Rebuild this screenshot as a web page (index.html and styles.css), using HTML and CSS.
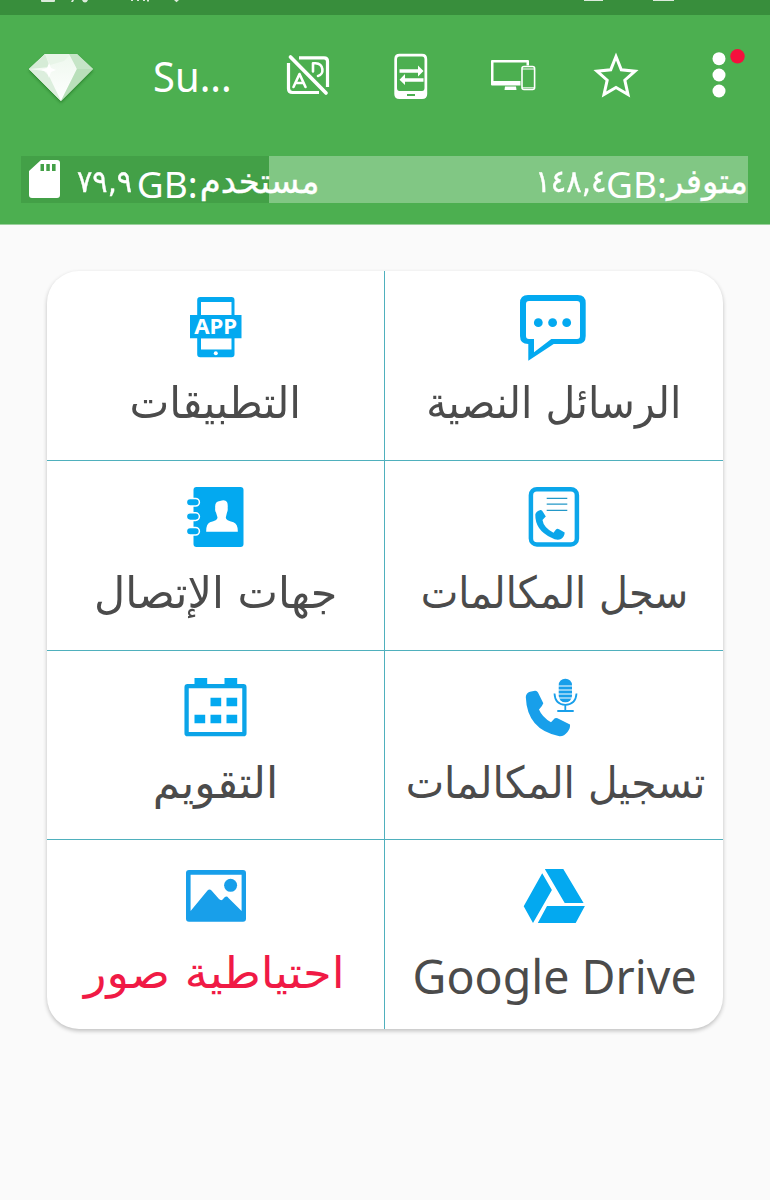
FILE: index.html
```html
<!DOCTYPE html>
<html lang="ar">
<head>
<meta charset="utf-8">
<title>Super Backup</title>
<link rel="stylesheet" href="styles.css">
</head>
<body>
<header class="header">
  <div class="status">
    <svg width="770" height="15" viewBox="0 0 770 15" fill="#dcebdc">
      <path d="M41 0h14v1q0 1-1 1H42q-1 0-1-1zM72 0h2l-1 2h-2zM82 0h6q-1 2.500-3 2.500T82 0zM131 0h2v1h-2zM137 0h2v1h-2zM143 0h2v1h-2zM147 0h2v1.500h-2zM174 0h5l-2.500 2.200zM584 0h19v1h-19zM653 0h21v1h-21z"/>
    </svg>
  </div>
  <div class="toolbar">
    <svg class="tool" viewBox="0 0 70 70">
      <defs>
        <linearGradient id="gem" x1="0" y1="0" x2="0" y2="1"><stop offset="0" stop-color="#eef8ee"/><stop offset="1" stop-color="#fff"/></linearGradient>
      </defs>
      <path class="gem-shadow" d="M19 13H51L67 28 35 60 3 28z" fill="#c3e3c4"/>
      <path d="M19 13H45L51 28 35 60 3 28z" fill="url(#gem)"/>
      <path d="M19 13H45L38 20 24 24z" fill="#e8f5e8"/>
      <path d="M3 28L19 13 24 26z" fill="#d6ecd7"/>
      <path d="M3 28L18 30 23 35 35 60z" fill="#dceedd"/>
      <path d="M51 28L67 28 35 60z" fill="#b9dfba"/>
      <path d="M51 28L43 13H51L67 28z" fill="#c6e5c7"/>
      <path d="M23 22l2 5 5 2-5 2-2 6-2-6-6-2 6-2z" fill="#fff"/>
    </svg>
    <span class="title">Su...</span>
    <svg class="tool" viewBox="0 0 70 70" fill="none" stroke="#fff">
      <path stroke-width="3.200" d="M26 16.800H51Q54.500 16.800 54.500 20.300V46M15.500 22V47.500Q15.500 51.500 19.500 51.500H46"/>
      <path stroke-width="3.700" stroke-linecap="round" d="M17.500 16L53 52"/>
      <path stroke-width="2.600" stroke-linecap="round" stroke-linejoin="round" d="M20.500 46L26.500 33 32.500 46M22.500 42H30.500M40 30.500V22.300H42.500C51 22.800 51.500 33.500 45 35"/>
    </svg>
    <svg class="tool" viewBox="0 0 70 70">
      <path fill="#fff" fill-rule="evenodd" d="M23.500 12.800H46Q51.200 12.800 51.200 18V53Q51.200 58 46 58H23.500Q18.300 58 18.300 53V18Q18.300 12.800 23.500 12.800zM23.500 15.500Q21 15.500 21 18.500V47Q21 50 23.500 50H46Q48.500 50 48.500 47V18.500Q48.500 15.500 46 15.500zM31 53V55H39V53z"/>
      <path fill="#fff" d="M23.500 28.300H42V24.500L47.500 30 42 35.500V31.700H23.500zM47.500 37.200H29V33L23.500 38.800 29 44V40.700H47.500z"/>
    </svg>
    <svg class="tool" viewBox="0 0 70 70">
      <path fill="#fff" fill-rule="evenodd" d="M14 19H50Q51 19 51 20V24.500H48.500V21.500H15.500V40H42.500V44.500H14Q13 44.500 13 43.500V20Q13 19 14 19zM27 45.500H38L38.500 49H26.500z"/>
      <rect x="44" y="25.500" width="12.600" height="23" rx="2" fill="none" stroke="#fff" stroke-width="1.600"/>
      <path stroke="#fff" d="M44 28H56.500M44 46.800H56.500"/>
    </svg>
    <svg class="tool" viewBox="0 0 70 70">
      <path d="M35 15.500L40.300 28.800 54 30.200 43.800 39.200 47 53.500 35 46.500 23 53.500 26.200 39.200 16 30.200 29.700 28.800z" fill="none" stroke="#fff" stroke-width="3"/>
    </svg>
    <svg class="tool" viewBox="0 0 70 70" fill="#fff">
      <circle cx="35" cy="17.700" r="6.500"/><circle cx="35" cy="34" r="6.500"/><circle cx="35" cy="50" r="6.500"/>
      <circle cx="53.500" cy="15.300" r="7.200" fill="#f5103d"/>
    </svg>
  </div>
  <div class="storage">
    <div class="used-fill"></div>
    <div class="used">
      <svg class="sd" viewBox="0 0 31 38"><path fill="#fff" fill-rule="evenodd" d="M12 0H28Q31 0 31 3V35Q31 38 28 38H3Q0 38 0 35V11zM11.500 4V11H15V4zM17.300 4V11H20.800V4zM23 4V11H26.600V4z"/></svg>
      <div class="amount" dir="rtl"><span class="word w-used">مستخدم</span><span class="unit">:</span><span class="unit">GB</span><span class="num n-used">٧٩,٩</span></div>
    </div>
    <div class="amount" dir="rtl"><span class="word w-free">متوفر</span><span class="unit">:</span><span class="unit">GB</span><span class="num n-free">١٤٨,٤</span></div>
  </div>
</header>
<main class="card">
  <div class="tile">
    <svg class="icon" viewBox="0 0 80 70" fill="#03a9f0">
      <path fill-rule="evenodd" d="M24.200 6H55.500Q58.500 6 58.500 9V63.300Q58.500 66.300 55.500 66.300H24.200Q21.200 66.300 21.200 63.300V9Q21.200 6 24.200 6zM25 11V24H55.500V11zM25 47.300V58.500H55.500V47.300z"/>
      <path d="M14 24H65.500V47.300H14z"/><circle cx="39.800" cy="62.300" r="2" fill="#fff"/>
      <text class="app" x="39.700" y="42.800" text-anchor="middle" textLength="43" lengthAdjust="spacingAndGlyphs" fill="#fff">APP</text>
    </svg>
    <span class="label l-apps" dir="rtl">التطبيقات</span>
  </div>
  <div class="tile">
    <svg class="icon" viewBox="0 0 80 70" fill="#03a9f0">
      <path fill-rule="evenodd" d="M14 4H63.700Q71.700 4 71.700 12V45Q71.700 53 63.700 53H39.700L14.300 69.700V53Q6 53 6 45V12Q6 4 14 4zM15 10Q12 10 12 13V45Q12 48 15 48H20V61.300L37.300 48H63Q66 48 66 45V13Q66 10 63 10z"/>
      <circle cx="24.300" cy="31.700" r="4.400"/><circle cx="38.600" cy="31.700" r="4.400"/><circle cx="52.700" cy="31.700" r="4.400"/>
    </svg>
    <span class="label l-sms" dir="rtl">الرسائل النصية</span>
  </div>
  <div class="tile">
    <svg class="icon" viewBox="0 0 80 70" fill="#03a9f0">
      <rect x="17.500" y="6" width="50" height="60" rx="3"/>
      <g stroke="#fff" stroke-width="1.500"><rect x="10.400" y="17.500" width="13" height="7.600" rx="3.800"/><rect x="10.400" y="31.800" width="13" height="7.600" rx="3.800"/><rect x="10.400" y="46.400" width="13" height="7.600" rx="3.800"/></g>
      <path fill="#fff" d="M30.200 50.700Q30 43 34 41.200Q41.500 39.500 41.500 36.500L40 31.500Q38.800 30 39.200 27Q38.500 20.500 44 20Q49 18 51 21Q52 23 51.700 27Q52 30 51 31.500L49.800 36.500Q49.800 39.500 57.500 41.200Q62 43 61.800 50.700z"/>
    </svg>
    <span class="label l-contacts" dir="rtl">جهات الإتصال</span>
  </div>
  <div class="tile">
    <svg class="icon" viewBox="0 0 80 70" fill="#0ba6ea">
      <rect x="16.900" y="8.200" width="46" height="55.300" rx="6" fill="none" stroke="#0ba6ea" stroke-width="4.500"/>
      <path stroke="#2398c8" stroke-width="1.300" d="M32.700 17.300H53.300M32.700 23.100H53.300M32.700 29.300H53.300"/>
      <path d="M21.300 33.500Q22 30 26.500 29Q28 28.800 29 31L31.800 35.500Q30.500 36.500 28.500 39Q29.500 46.500 39.500 51.800L42 48.500Q43.300 47.200 45 48.300L50.700 51.500Q50.500 55.500 47 58Q43 60 37 56.500Q21 49 21.300 33.500z"/>
    </svg>
    <span class="label l-calls" dir="rtl">سجل المكالمات</span>
  </div>
  <div class="tile">
    <svg class="icon" viewBox="0 0 80 70" fill="#03a9f0">
      <rect x="10.600" y="15.200" width="57.800" height="48" rx="1" fill="none" stroke="#0ba4e8" stroke-width="4.300"/>
      <path d="M18.500 7H31.200V14H18.500zM48.500 7H61.200V14H48.500zM34.500 26.700H45.200V35.300H34.500zM50.500 26.700H61.200V35.300H50.500zM18.500 43.700H29.200V52.200H18.500zM34.500 43.700H45.200V52.200H34.500zM50.500 43.700H61.200V52.200H50.500z"/>
    </svg>
    <span class="label l-calendar" dir="rtl">التقويم</span>
  </div>
  <div class="tile">
    <svg class="icon" viewBox="0 0 80 70" fill="#189fea">
      <path d="M11.800 26Q12 22 16 20.700L21 19.700Q23 19.500 24 21.500L29.300 32.300Q28.500 35 25 38.500Q28 46 37 51.300L40.500 47.500Q41.500 46.500 43.500 47.200L56 53.500Q56.500 57 53.500 61Q50 65.500 45.500 65.200Q13 59 11.800 26z"/>
      <rect x="44.700" y="7.700" width="13.300" height="23.600" rx="6.500"/>
      <path stroke="#fff" stroke-width="1" d="M44 15H59M44 19H59M44 23H59M44 27H59"/>
      <path fill="none" stroke="#189fea" stroke-width="1.800" d="M40.500 22.500Q41 33.500 51.300 33.800Q61.800 33.500 62.500 22.500M51.300 33.800V39.500M43.300 40H59.700"/>
    </svg>
    <span class="label l-record" dir="rtl">تسجيل المكالمات</span>
  </div>
  <div class="tile last">
    <svg class="icon" viewBox="0 0 80 70" fill="#189fea">
      <path fill-rule="evenodd" d="M13 9H67Q70 9 70 12V57.800Q70 60.800 67 60.800H13Q10 60.800 10 57.800V12Q10 9 13 9zM14.600 13.700V50L31.500 29.500Q33.500 27.500 35.500 29.500L43 38Q45.500 40.500 47.500 37.500Q50.200 34 52.500 37L65.600 50V13.700z"/>
      <circle cx="54.600" cy="24.300" r="6.500"/>
    </svg>
    <span class="label l-photos" dir="rtl">احتياطية صور</span>
  </div>
  <div class="tile last">
    <svg class="icon" viewBox="0 0 80 70" fill="#03a9f0">
      <path d="M28.200 12.300L37.900 29 19 62 9.700 45.300zM30.800 8H49.300L69.600 42H50.700zM33 45H70.900L61.700 62H23.800z"/>
    </svg>
    <span class="label latin">Google Drive</span>
  </div>
</main>
</body>
</html>
```
FILE: styles.css
```css
html { background: #fafafa; }
body { margin: 0; min-height: 1200px; background: #fafafa; font-family: "Noto Sans", "DejaVu Sans", sans-serif; }
.header { height: 225px; background: #4caf50; border-bottom: 1px solid #9bd09d; box-sizing: border-box; }
.status { height: 15px; background: #388e3c; }
.status svg, .tool, .icon, .sd { display: block; }
.toolbar { display: grid; grid-template-columns: 122px 135px 102px 103px 102px 103px 103px; height: 122px; align-items: center; justify-items: center; }
.tool { width: 70px; height: 70px; overflow: visible; }
.gem-shadow { filter: drop-shadow(0 2px 1.5px rgba(0, 70, 0, .4)); }
.title { color: #fff; font-size: 42px; line-height: 60px; white-space: nowrap; transform: translateX(3px) scaleX(.95); }
.storage { position: relative; display: flex; justify-content: space-between; width: 727px; height: 47px; margin: 19px 0 0 21px; background: #81c784; color: #fff; }
.used-fill { position: absolute; left: 0; top: 0; width: 248px; height: 47px; background: #43a047; }
.used { position: relative; display: flex; gap: 17px; padding: 4px 0 0 8px; }
.used .amount { margin-top: -4px; }
.sd { width: 31px; height: 38px; }
.amount { display: flex; height: 47px; white-space: nowrap; line-height: 56px; }
.word, .num { font-family: "DejaVu Sans", sans-serif; font-size: 31px; line-height: 51px; -webkit-text-stroke: .4px #fff; }
.word { font-size: 34px; }
.w-used { margin-left: 2px; }
.n-used { transform: scaleX(.92); transform-origin: left; }
.n-free { transform: scaleX(.93); transform-origin: right; }
.unit { font-size: 37px; }
.card { display: grid; grid-template-columns: 338px 338px; grid-template-rows: 190px 190px 189px 189px; width: 676px; height: 758px; margin: 46px 0 0 47px; border-radius: 32px; overflow: hidden; background: #fff; box-shadow: 0 2px 4px rgba(0, 0, 0, .24); }
.tile { display: flex; flex-direction: column; align-items: center; padding-top: 20px; border-bottom: 1px solid #4fb0bd; box-sizing: border-box; }
.tile:nth-child(odd) { border-right: 1px solid #4fb0bd; }
.tile.last { padding-top: 21px; border-bottom: 0; }
.icon { width: 80px; height: 70px; flex: none; }
.app { font: bold 20.5px "Noto Sans", sans-serif; }
.label { font-family: "DejaVu Sans", sans-serif; font-size: 44px; line-height: 60px; margin-top: 12px; color: #4b4b4b; white-space: nowrap; }
.l-apps { transform: scaleX(.96); }
.l-sms { transform: scaleX(.933); }
.l-contacts { transform: scaleX(.976); }
.l-calls { transform: translateX(1px) scaleX(.907); }
.l-record { transform: translateX(1px) scaleX(.928); }
.l-photos { color: #f01a45; transform: translateX(-1px) scaleX(1.057); }
.latin { font-family: "Noto Sans", sans-serif; font-size: 48px; margin-top: 15px; transform: translateX(1px) scaleX(.969); }
```
